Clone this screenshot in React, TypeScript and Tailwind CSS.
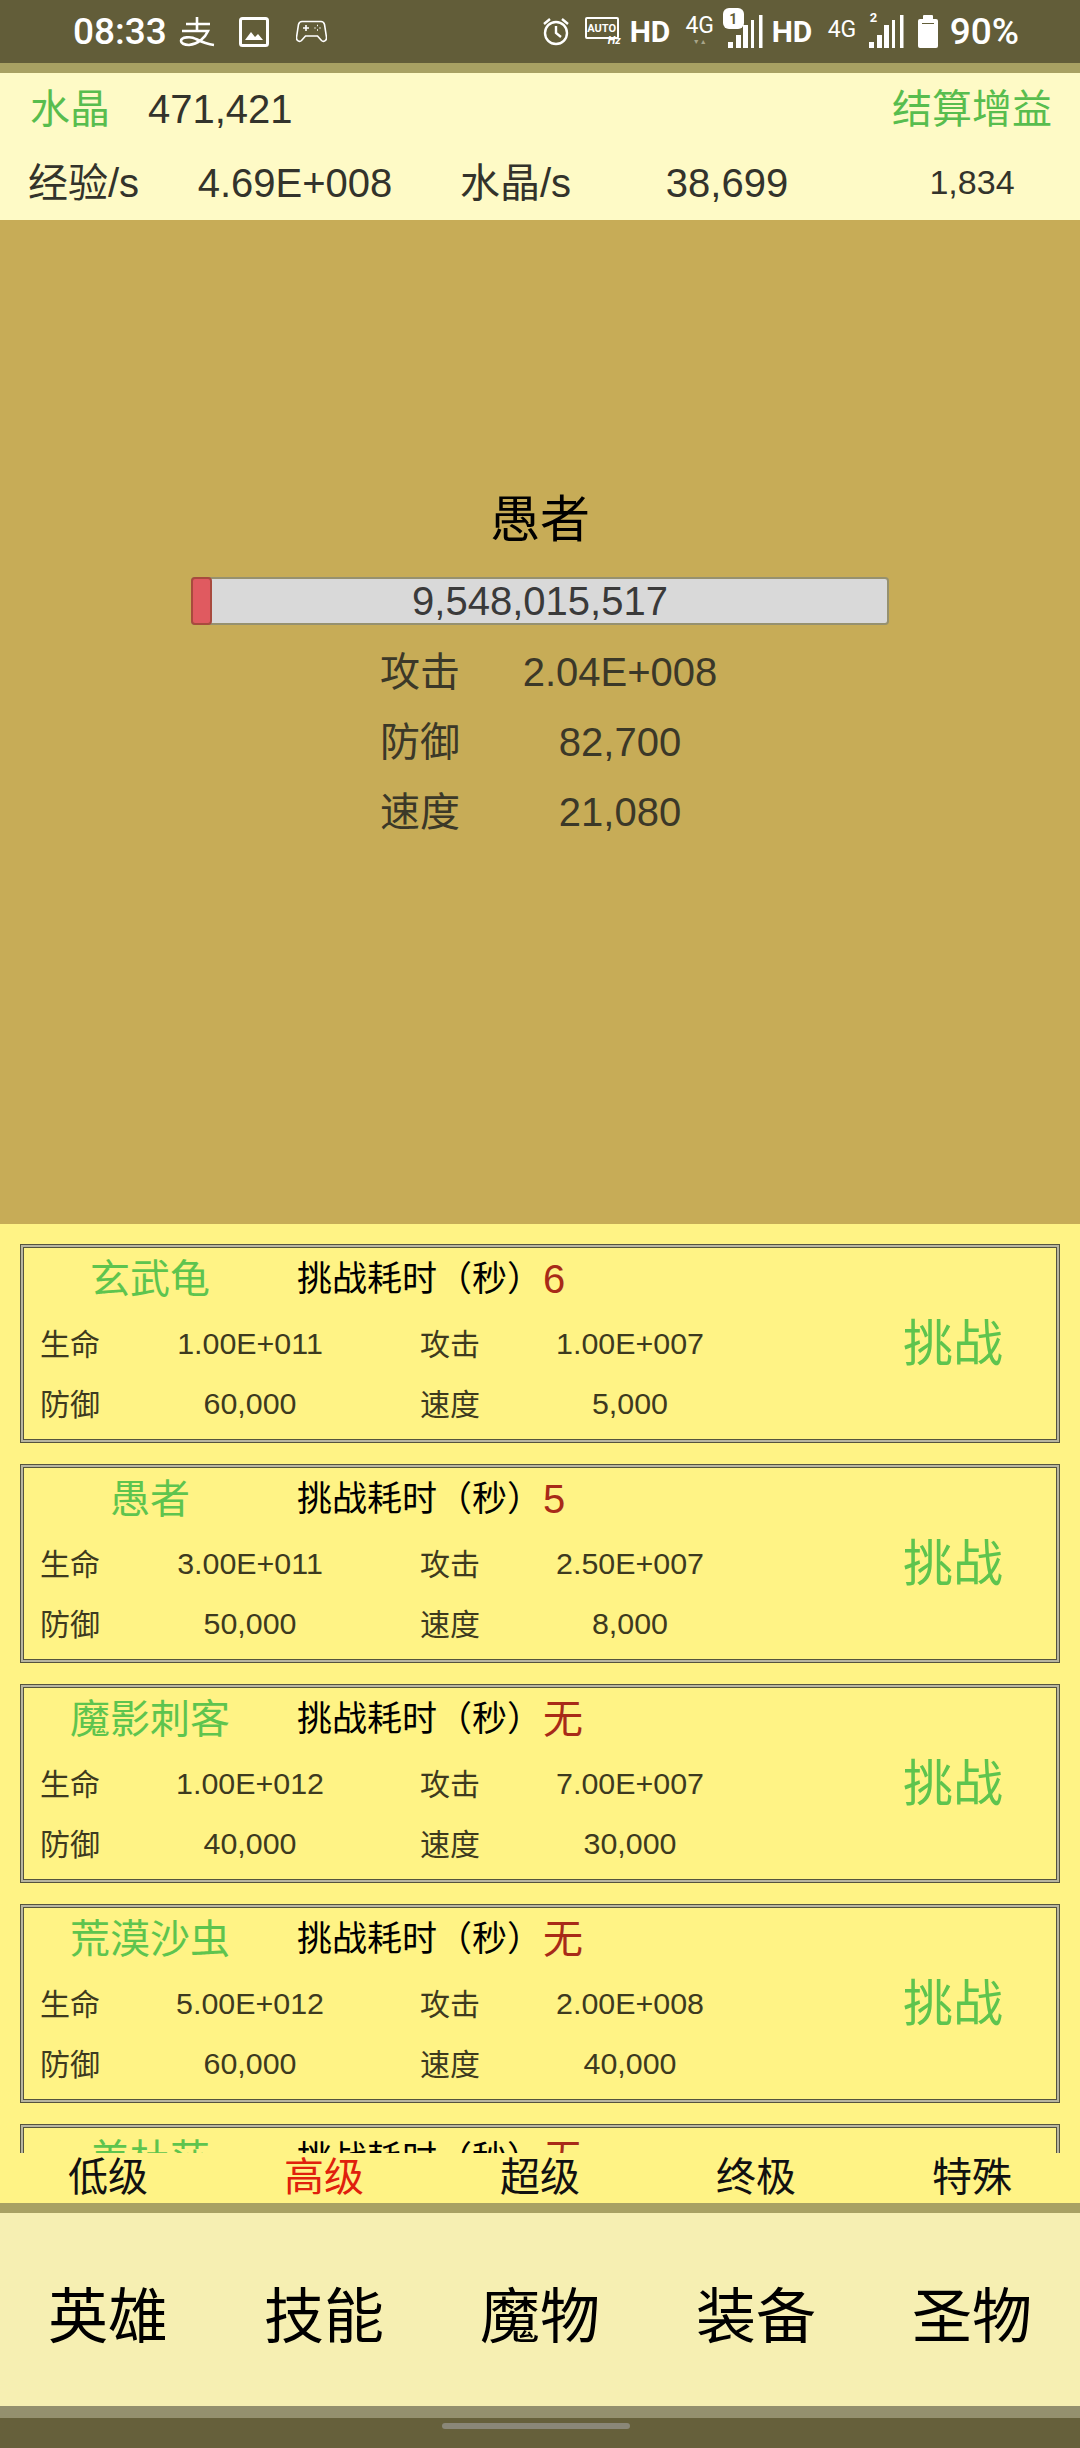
import React from 'react';

const monsters = [
  { name: '玄武龟', time: '6', hp: '1.00E+011', atk: '1.00E+007', def: '60,000', spd: '5,000' },
  { name: '愚者', time: '5', hp: '3.00E+011', atk: '2.50E+007', def: '50,000', spd: '8,000' },
  { name: '魔影刺客', time: '无', hp: '1.00E+012', atk: '7.00E+007', def: '40,000', spd: '30,000' },
  { name: '荒漠沙虫', time: '无', hp: '5.00E+012', atk: '2.00E+008', def: '60,000', spd: '40,000' },
  { name: '美杜莎', time: '无', hp: '', atk: '', def: '', spd: '' },
];

const bossStats = [
  ['攻击', '2.04E+008'],
  ['防御', '82,700'],
  ['速度', '21,080'],
];

const tiers = ['低级', '高级', '超级', '终极', '特殊'];
const navItems = ['英雄', '技能', '魔物', '装备', '圣物'];

function SignalBars({ className }: { className: string }) {
  return (
    <svg viewBox="0 0 36 33" className={className} fill="white">
      <rect x="0" y="27" width="5" height="6" />
      <rect x="8" y="20" width="5" height="13" />
      <rect x="15" y="10" width="5" height="23" />
      <rect x="23" y="5" width="3" height="28" />
      <rect x="31" y="0" width="3.500" height="33" />
    </svg>
  );
}

function StatusBar() {
  return (
    <div className="flex h-[63px] shrink-0 items-center bg-[#625d39] pl-[73px] pr-[61px] text-white font-['Roboto',sans-serif]">
      <span className="w-[92px] text-[37px] font-medium leading-none">08:33</span>
      {/* alipay mark */}
      <svg viewBox="0 0 36 30" className="ml-[14px] h-[30px] w-[36px]" fill="none" stroke="white" strokeWidth="2.6">
        <path d="M7 7h24M18 0v13M3 14h26c-3 7-10 13-19 14-5 0-8-2-8-4 0-4 10-5 15-2 4 2 10 5 18 6" />
      </svg>
      <svg viewBox="0 0 30 30" className="ml-[24px] h-[30px] w-[30px]" fill="none">
        <rect x="1.500" y="1.500" width="27" height="27" rx="2" stroke="white" strokeWidth="3" />
        <path d="M6 23l6-8 4 5 3-3 5 6z" fill="white" />
      </svg>
      <svg viewBox="0 0 31 23" className="ml-[27px] h-[23px] w-[31px]" fill="none" stroke="white" strokeWidth="1.600">
        <path d="M6 1.500h19c2 0 3 1 3.500 3l2 13c.3 3-3 5-5 3l-4-4.500H9.500l-4 4.500c-2 2-5.300 0-5-3l2-13c.5-2 1.500-3 3.500-3z" />
        <path d="M7 8h6M10 5v6M21 5.500h1M21 10h1M18.500 8h1M23.500 8h1" />
      </svg>
      <div className="ml-auto flex items-center">
        <svg viewBox="0 0 28 29" className="h-[29px] w-[28px]" fill="none" stroke="white" strokeWidth="2.400">
          <circle cx="14" cy="16" r="11" />
          <path d="M14 9v7l5 4M2 7l6-5M26 7l-6-5" />
        </svg>
        <div className="relative ml-[15px] h-[29px] w-[36px]">
          <div className="flex h-[22px] w-[34px] items-center justify-center rounded-[2px] border-2 border-white text-[11px] font-bold leading-none">AUTO</div>
          <span className="absolute bottom-0 right-0 text-[11px] font-bold italic leading-none">Hz</span>
        </div>
        <span className="ml-[9px] w-[42px] text-[30px] font-bold leading-none">HD</span>
        <div className="ml-[14px] flex h-[32px] w-[28px] flex-col items-center">
          <span className="text-[23px] leading-[20px]">4G</span>
          <span className="mt-[3px] text-[7px] leading-[7px] text-[#a8a58a]">▼▲</span>
        </div>
        <div className="relative ml-[14px] h-[33px] w-[36px]">
          <SignalBars className="h-[33px] w-[36px]" />
          <span className="absolute left-[-5px] top-[-7px] flex h-[21px] w-[21px] items-center justify-center rounded-[6px] bg-white text-[14px] font-bold leading-none text-[#625d39]">1</span>
        </div>
        <span className="ml-[8px] w-[42px] text-[30px] font-bold leading-none">HD</span>
        <span className="ml-[14px] w-[28px] pb-[4px] text-[23px] leading-none">4G</span>
        <div className="relative ml-[13px] h-[33px] w-[36px]">
          <SignalBars className="h-[33px] w-[36px]" />
          <span className="absolute left-[1px] top-[-4px] text-[13px] font-bold leading-none">2</span>
        </div>
        <div className="ml-[13px] flex w-[20px] flex-col items-center">
          <div className="h-[4px] w-[10px] rounded-t-[1px] bg-white" />
          <div className="h-[29px] w-[20px] rounded-[2px] bg-white pt-[4px]">
            <div className="mx-auto h-[1px] w-[12px] bg-[#625d39]" />
          </div>
        </div>
        <span className="ml-[12px] text-[37px] font-medium leading-none">90%</span>
      </div>
    </div>
  );
}

function ResourceHeader() {
  return (
    <div className="h-[147px] shrink-0 bg-[#fefac6] text-[40px] text-[#33332b]">
      <div className="flex h-[72px] items-center pl-[30px] pr-[28px]">
        <span className="w-[118px] text-[#58bd4e]">水晶</span>
        <span>471,421</span>
        <span className="ml-auto text-[#58bd4e]">结算增益</span>
      </div>
      <div className="flex h-[75px] items-center pl-[28px]">
        <span className="w-[152px]">经验/s</span>
        <span className="w-[230px] text-center">4.69E+008</span>
        <span className="ml-[50px] w-[144px]">水晶/s</span>
        <span className="w-[246px] text-center">38,699</span>
        <span className="ml-[14px] w-[216px] text-center text-[34px]">1,834</span>
      </div>
    </div>
  );
}

function BossPanel() {
  return (
    <div className="flex h-[1004px] shrink-0 flex-col items-center bg-[#c7ac57] pt-[270px] text-[40px] text-[#3b3828]">
      <div className="h-[60px] text-[50px] leading-[60px] text-black">愚者</div>
      <div className="relative mt-[27px] flex h-[48px] w-[698px] items-center justify-center rounded-[4px] border-2 border-[#96916f] bg-[#d9d9d9] text-[#3a3a3a]">
        <div className="absolute inset-y-[-2px] left-[-2px] w-[21px] rounded-[4px] border-2 border-[#a84a3e] bg-[#e05a60]" />
        <span className="relative">9,548,015,517</span>
      </div>
      <div className="mt-[12px] self-start pl-[380px]">
        {bossStats.map(([label, value]) => (
          <div key={label} className="flex h-[70px] items-center">
            <span className="w-[80px]">{label}</span>
            <span className="w-[320px] text-center">{value}</span>
          </div>
        ))}
      </div>
    </div>
  );
}

function StatRow({ a, b, c, d }: { a: string; b: string; c: string; d: string }) {
  return (
    <div className="flex h-[60px] items-center pl-[16px] text-[30px] text-[#3d3a1f]">
      <span className="w-[60px]">{a}</span>
      <span className="w-[300px] text-center text-[30.4px]">{b}</span>
      <span className="ml-[20px] w-[60px]">{c}</span>
      <span className="w-[300px] text-center text-[30.4px]">{d}</span>
    </div>
  );
}

function MonsterCard({ m }: { m: (typeof monsters)[number] }) {
  return (
    <div className="mb-[21px] h-[199px] shrink-0 border border-[#55533f] bg-[#b8b5a0] p-[2px]">
      <div className="flex h-full border border-[#55533f] bg-[#fff385]">
        <div className="w-[826px]">
          <div className="flex h-[62px] items-center">
            <span className="w-[252px] text-center text-[40px] text-[#5ec44e]">{m.name}</span>
            <span className="ml-[21px] w-[246px] text-[35px] text-black">挑战耗时（秒）</span>
            <span className="text-[40px] text-[#a82a18]">{m.time}</span>
          </div>
          <div className="mt-[4px]">
            <StatRow a="生命" b={m.hp} c="攻击" d={m.atk} />
            <StatRow a="防御" b={m.def} c="速度" d={m.spd} />
          </div>
        </div>
        <div className="flex flex-1 items-center justify-center pt-[2px] text-[50px] text-[#5ec44e]">挑战</div>
      </div>
    </div>
  );
}

export default function App() {
  return (
    <div className="flex h-[2448px] w-[1080px] flex-col overflow-hidden font-['Liberation_Sans','Noto_Sans_CJK_SC',sans-serif]">
      <StatusBar />
      <div className="h-[10px] shrink-0 bg-[#a8a163]" />
      <ResourceHeader />
      <BossPanel />

      {/* monster list, last card runs under the tier tabs */}
      <div className="flex h-[929px] shrink-0 flex-col overflow-hidden bg-[#fff385] px-[20px] pt-[20px]">
        {monsters.map((m) => (
          <MonsterCard key={m.name} m={m} />
        ))}
      </div>

      <div className="grid h-[50px] shrink-0 grid-cols-5 items-center bg-[#fff385] pb-[3px] text-center text-[40px] leading-[44px] text-[#111]">
        {tiers.map((t) => (
          <span key={t} className={t === '高级' ? 'text-[#e0200c]' : ''}>{t}</span>
        ))}
      </div>
      <div className="h-[10px] shrink-0 bg-[#a8a163]" />

      <div className="grid h-[193px] shrink-0 grid-cols-5 items-center bg-[#f6efb2] pt-[16px] text-center text-[60px] text-black">
        {navItems.map((n) => (
          <span key={n}>{n}</span>
        ))}
      </div>
      <div className="h-[12px] shrink-0 bg-[#94906e]" />

      <div className="flex-1 bg-[#66603b] pl-[442px] pt-[5px]">
        <div className="h-[6px] w-[188px] rounded-full bg-[#8a8778]" />
      </div>
    </div>
  );
}
